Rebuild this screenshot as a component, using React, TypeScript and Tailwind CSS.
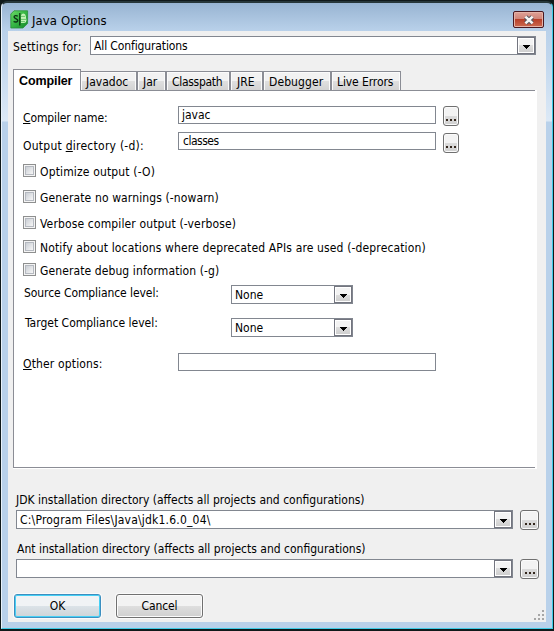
import type { ReactNode } from "react";

function ComboArrow() {
  return (
    <span className="flex h-full w-[18px] shrink-0 border border-[#73757f] bg-white p-px">
      <span className="flex flex-1 items-center justify-center bg-[linear-gradient(#f3f3f3_50%,#dddddd_50%,#cfcfcf)]">
        <svg width="7" height="4" viewBox="0 0 7 4" className="mt-[2px]" shapeRendering="crispEdges">
          <path d="M0 0h7v1H0zM1 1h5v1H1zM2 2h3v1H2zM3 3h1v1H3z" fill="#000" />
        </svg>
      </span>
    </span>
  );
}

function Combo({ className, children }: { className: string; children?: ReactNode }) {
  return (
    <div className={`flex h-[19px] shrink-0 border border-[#828790] bg-white ${className}`}>
      <span className="flex-1 pt-px pl-[3px] leading-4 whitespace-pre">{children}</span>
      <span className="-my-px -mr-px flex border border-l-0 border-[#828790]">
        <ComboArrow />
      </span>
    </div>
  );
}

function Field({ className = "", children }: { className?: string; children?: ReactNode }) {
  return (
    <div className={`h-[18px] w-[258px] shrink-0 border border-[#828790] bg-white leading-4 ${className}`}>
      {children}
    </div>
  );
}

function Browse({ className }: { className: string }) {
  return (
    <button
      className={`flex h-5 shrink-0 items-end justify-center rounded-[3px] border border-[#707070] bg-[linear-gradient(#f3f3f3_50%,#dcdcdc_50%,#cfcfcf)] pb-1 shadow-[inset_0_0_0_1px_#fbfbfb] ${className}`}
    >
      <span className="flex gap-[2px]">
        <i className="h-[2px] w-[2px] bg-[#33261c]" />
        <i className="h-[2px] w-[2px] bg-[#33261c]" />
        <i className="h-[2px] w-[2px] bg-[#33261c]" />
      </span>
    </button>
  );
}

function Check({ className, children }: { className: string; children: ReactNode }) {
  return (
    <label className={`flex h-[13px] ${className}`}>
      <span className="mr-1 flex h-[13px] w-[13px] shrink-0 border border-[#8e8f8f] bg-[#f4f4f4] p-px">
        <span className="flex-1 border border-[#b5b9c0] bg-[linear-gradient(135deg,#cbcfd5,#f6f6f6)]" />
      </span>
      <span className="leading-4 whitespace-pre">{children}</span>
    </label>
  );
}

function Tab({ className, children }: { className: string; children: ReactNode }) {
  return (
    <div
      className={`mt-[2px] flex h-[19px] border border-b-0 border-[#8b8d95] bg-[linear-gradient(#f2f2f2_50%,#e0e0e0_50%,#d3d3d3)] pt-[2px] leading-4 whitespace-pre shadow-[inset_1px_1px_0_#fbfbfb,inset_-1px_0_0_#fbfbfb] ${className}`}
    >
      {children}
    </div>
  );
}

function AppIcon() {
  return (
    <svg width="19" height="19" viewBox="0 0 19 19">
      <defs>
        <linearGradient id="leaf" x1="0" y1="0" x2="1" y2="1">
          <stop offset="0" stopColor="#6ddc66" />
          <stop offset="0.5" stopColor="#35b544" />
          <stop offset="1" stopColor="#14882b" />
        </linearGradient>
      </defs>
      <path d="M4 .8H17.6V13.5L13 18H.8V4Z" fill="url(#leaf)" stroke="#2a8f3a" strokeWidth="0.8" />
      <path d="M11 5.5Q11.5 3.5 13.5 3.5Q15.5 3.5 15.8 6L16.5 10.5Q16 13 14 13H11z" fill="#c4f3b8" />
      <path d="M11 6.4h4M11 9.4h5M11 11.6h4" stroke="#4fb857" strokeWidth="0.8" />
      <path
        d="M7.8 6.2C6.4 5.2 4 5.4 4.1 7C4.2 8.7 7.8 8.4 7.8 10.4C7.8 12.2 5.2 12.4 3.6 11.4"
        fill="none"
        stroke="#0c3514"
        strokeWidth="1.4"
      />
      <path d="M9.8 3v12.5" stroke="#06200b" strokeWidth="1.1" />
    </svg>
  );
}

function CloseButton() {
  return (
    <button className="flex h-[17px] w-[31px] items-center justify-center rounded-[2px] border border-[#4a1820] bg-[linear-gradient(#dfa197,#d08376_48%,#b8402a_50%,#cc6a50)] shadow-[inset_0_0_0_1px_#e5b3a8]">
      <svg width="12" height="10" viewBox="0 0 12 10">
        <path d="M2.6 1.8L9.4 8.2M9.4 1.8L2.6 8.2" stroke="#55565f" strokeWidth="4.4" />
        <path d="M2.4 1.6L9.6 8.4M9.6 1.6L2.4 8.4" stroke="#f6f6f6" strokeWidth="2.6" />
      </svg>
    </button>
  );
}

export default function App() {
  return (
    <div className="h-[631px] w-[554px] overflow-hidden bg-[#10191a] pt-px pr-px pb-[2px] pl-px font-['DejaVu_Sans_Condensed','DejaVu_Sans',sans-serif] text-[12px] text-black">
      <div className="flex h-[628px] flex-col overflow-hidden rounded-t-[6px] border border-t-2 border-[#3fcbe6] border-t-[#27373a] border-l-[#e9f2fa] bg-[linear-gradient(#98b4d2,#b9d1ea_28px,#c3d8ee_60px,#dce9f6_118px,#b9d1ea_119px)] px-[6px] pb-[6px]">
        <header className="flex h-7 shrink-0 items-start pt-[7px] pr-[2px] pl-[2px]">
          <AppIcon />
          <span className="ml-[3px] flex-1 pt-[3px] text-[13px] leading-4 tracking-[0.1px]">Java Options</span>
          <div className="pt-px">
            <CloseButton />
          </div>
        </header>

        <main className="flex h-[591px] flex-col bg-[#f0f0f0] pl-[5px]">
          <div className="flex h-[38px] shrink-0 pt-[5px]">
            <span className="w-[77px] pt-[3px] leading-4 tracking-[0.2px] whitespace-pre">Settings for:</span>
            <Combo className="w-[446px] tracking-[-0.12px]">All Configurations</Combo>
          </div>

          <div className="flex h-[21px] shrink-0">
            <div className="z-10 h-[22px] w-[68px] border border-b-0 border-[#8b8d95] bg-white pt-[3px] pl-[5px] font-['Liberation_Sans',Arial,sans-serif] text-[12.5px] leading-4 font-bold tracking-[-0.1px]">
              Compiler
            </div>
            <Tab className="w-[56px] border-l-0 pl-[5px]">Javadoc</Tab>
            <Tab className="w-[29px] pl-[5px]">Jar</Tab>
            <Tab className="w-[64px] pl-[5px] tracking-[-0.3px]">Classpath</Tab>
            <Tab className="w-[33px] pl-[6px]">JRE</Tab>
            <Tab className="w-[68px] pl-[5px] tracking-[0.1px]">Debugger</Tab>
            <Tab className="w-[70px] pl-[5px] tracking-[-0.1px]">Live Errors</Tab>
          </div>

          <section className="h-[379px] w-[524px] shrink-0 bg-white pr-[2px] pb-px">
            <div className="flex h-[378px] flex-col border border-r-0 border-[#8b8d95] pt-[15px] pl-[9px]">
              <div className="flex h-[26px] shrink-0">
                <span className="w-[155px] pt-[4px] leading-4 tracking-[-0.13px]">
                  <u>C</u>ompiler name:
                </span>
                <Field className="pl-[3px]">javac</Field>
                <Browse className="ml-[7px] w-4" />
              </div>
              <div className="flex h-[32px] shrink-0">
                <span className="w-[155px] pt-[6px] leading-4 tracking-[0.25px]">
                  Output <u>d</u>irectory (-d):
                </span>
                <Field className="pl-[4px] tracking-[-0.5px]">classes</Field>
                <Browse className="mt-px ml-[7px] w-4" />
              </div>

              <Check className="mb-[13px] tracking-[0.15px]">Optimize output (-O)</Check>
              <Check className="mb-[13px] tracking-[0.12px]">Generate no warnings (-nowarn)</Check>
              <Check className="mb-[11px] tracking-[0.14px]">Verbose compiler output (-verbose)</Check>
              <Check className="mb-[10px] tracking-[0.14px]">
                Notify about locations where deprecated APIs are used (-deprecation)
              </Check>
              <Check className="mb-[9px] tracking-[0.1px]">Generate debug information (-g)</Check>

              <div className="flex h-[33px] shrink-0">
                <span className="w-[208px] pl-px leading-4 tracking-[-0.08px]">Source Compliance level:</span>
                <Combo className="w-[122px]">None</Combo>
              </div>
              <div className="flex h-[35px] shrink-0">
                <span className="-mt-[3px] w-[208px] pl-[2px] leading-4">Target Compliance level:</span>
                <Combo className="w-[122px]">None</Combo>
              </div>
              <div className="flex">
                <span className="w-[155px] pt-[3px] leading-4 tracking-[0.15px]">
                  <u>O</u>ther options:
                </span>
                <Field />
              </div>
            </div>
          </section>

          <div className="mt-[23px] h-[18px] shrink-0 pl-[3px] leading-4">
            JDK installation directory (affects all projects and configurations)
          </div>
          <div className="flex h-[31px] shrink-0 pl-[3px]">
            <Combo className="w-[497px] tracking-[0.2px]">C:\Program Files\Java\jdk1.6.0_04\</Combo>
            <Browse className="ml-[7px] w-[19px]" />
          </div>
          <div className="h-[18px] shrink-0 pl-[4px] leading-4">
            Ant installation directory (affects all projects and configurations)
          </div>
          <div className="flex h-[35px] shrink-0 pl-[3px]">
            <Combo className="w-[497px]" />
            <Browse className="ml-[7px] w-[19px]" />
          </div>

          <footer className="flex h-[28px] items-start gap-[15px] pr-[2px] pl-px">
            <button className="h-6 w-[87px] rounded-[3px] border border-[#3c8fc0] bg-[linear-gradient(#f0f3f5_48%,#dbe3e8_50%,#cdd4d8)] leading-4 shadow-[inset_0_0_0_1px_#46d0f5,0_0_0_1px_#fafafa]">
              OK
            </button>
            <button className="h-6 w-[87px] rounded-[3px] border border-[#707070] bg-[linear-gradient(#f2f2f2_48%,#dedede_50%,#cfcfcf)] leading-4 tracking-[-0.1px] shadow-[inset_0_0_0_1px_#fbfbfb,0_0_0_1px_#fafafa]">
              Cancel
            </button>
            <svg width="10" height="10" viewBox="0 0 10 10" className="mt-4 ml-auto" shapeRendering="crispEdges">
              <path d="M8 0h2v2H8zM4 4h2v2H4zM8 4h2v2H8zM0 8h2v2H0zM4 8h2v2H4zM8 8h2v2H8z" fill="#a6a6a6" />
            </svg>
          </footer>
        </main>
      </div>
    </div>
  );
}
